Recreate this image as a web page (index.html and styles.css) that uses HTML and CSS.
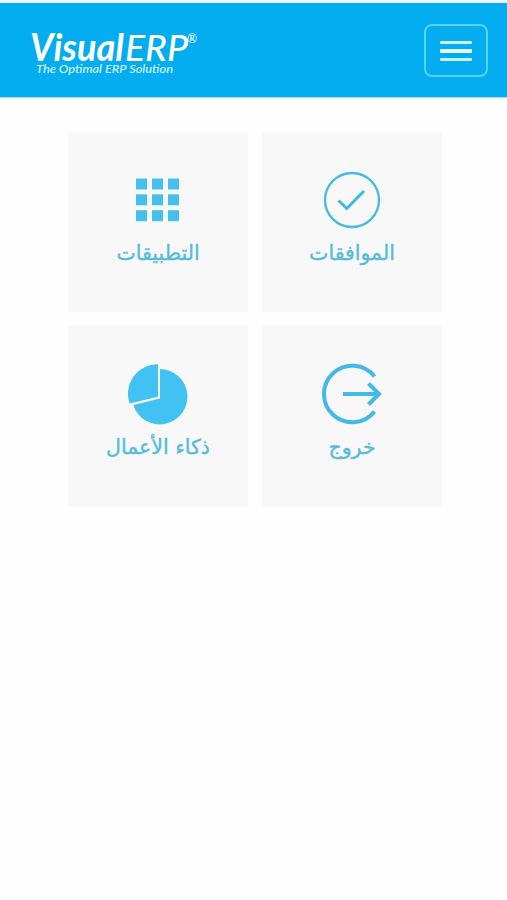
FILE: index.html
```html
<!DOCTYPE html>
<html lang="ar">
<head>
  <meta charset="UTF-8" />
  <meta name="viewport" content="width=device-width, initial-scale=1.0"/>
  <title>VisualERP</title>
  <link rel="stylesheet" href="styles.css">
</head>
<body>
  <header class="navbar">
    <svg class="logo" width="172" height="54" viewBox="0 0 172 54">
      <text class="logo-bold" x="0" y="33.5" textLength="94" lengthAdjust="spacingAndGlyphs">Visual</text>
      <text class="logo-light" x="95" y="33.5" textLength="63" lengthAdjust="spacingAndGlyphs">ERP</text>
      <text class="logo-mark" x="157" y="15.5" textLength="10" lengthAdjust="spacingAndGlyphs">®</text>
      <text class="logo-tagline" x="6" y="46" textLength="137" lengthAdjust="spacingAndGlyphs">The Optimal ERP Solution</text>
    </svg>
    <button class="menu-button" aria-label="Menu">
      <span class="bar"></span>
      <span class="bar middle"></span>
      <span class="bar"></span>
    </button>
  </header>

  <main class="tiles" dir="rtl">
    <a class="tile">
      <svg class="icon" width="64" height="64" viewBox="0 0 64 64">
        <circle cx="32" cy="32" r="27" fill="none" stroke="#45bbe4" stroke-width="2.3"/>
        <path d="M18.5 32.5L26.8 40.5L44 23" fill="none" stroke="#3db9e8" stroke-width="3"/>
      </svg>
      <span class="label">الموافقات</span>
    </a>
    <a class="tile">
      <svg class="icon" width="64" height="64" viewBox="0 0 64 64" fill="#45bfed">
        <rect x="10" y="10.5" width="11" height="11"/>
        <rect x="26" y="10.5" width="11" height="11"/>
        <rect x="42" y="10.5" width="11" height="11"/>
        <rect x="10" y="26.3" width="11" height="11"/>
        <rect x="26" y="26.3" width="11" height="11"/>
        <rect x="42" y="26.3" width="11" height="11"/>
        <rect x="10" y="42.2" width="11" height="11"/>
        <rect x="26" y="42.2" width="11" height="11"/>
        <rect x="42" y="42.2" width="11" height="11"/>
      </svg>
      <span class="label">التطبيقات</span>
    </a>
    <a class="tile">
      <svg class="icon" width="64" height="64" viewBox="0 0 64 64" fill="none" stroke="#42b9e6">
        <path d="M54.5 14.5A28.3 28.3 0 1 0 54.5 49.5" stroke-width="4"/>
        <path d="M23 32H58M48.5 21.5L59 32L48.5 42.5" stroke-width="4"/>
      </svg>
      <span class="label">خروج</span>
    </a>
    <a class="tile">
      <svg class="icon" width="64" height="64" viewBox="0 0 64 64" fill="#42c2f3">
        <path d="M34 7A27.7 27.7 0 1 1 7.3 43L34 36.5Z"/>
        <path d="M32 2.3V34.7L3.6 41.5A29.5 29.5 0 0 1 32 2.3Z"/>
      </svg>
      <span class="label">ذكاء الأعمال</span>
    </a>
  </main>
</body>
</html>
```

FILE: styles.css
```css
body {
  margin: 0;
  background-color: #fefefe;
  font-family: "DejaVu Sans", sans-serif;
}
.navbar {
  display: flex;
  align-items: flex-start;
  justify-content: space-between;
  box-sizing: border-box;
  height: 98px;
  padding: 24px 19px 0 30px;
  background-color: #03adf0;
  border-top: 3px solid #eaf7fc;
  border-bottom: 1px solid #a5e3fa;
}
.logo {
  display: block;
  overflow: visible;
  fill: #fff;
  font-family: Lato, sans-serif;
  font-style: italic;
}
.logo-bold {
  font-size: 38px;
  font-weight: 700;
}
.logo-light {
  font-size: 36px;
  font-weight: 500;
}
.logo-mark {
  font-size: 13px;
}
.logo-tagline {
  font-size: 12px;
  font-weight: 500;
  fill: #d5f5ff;
}
.menu-button {
  display: flex;
  flex-direction: column;
  align-items: center;
  justify-content: center;
  gap: 5px;
  width: 64px;
  height: 53px;
  margin-top: -3px;
  padding: 0;
  background: none;
  border: 2px solid #55d3fb;
  border-radius: 8px;
}
.bar {
  width: 32px;
  height: 3px;
  border-radius: 1px;
  background-color: #c4f3ff;
}
.middle {
  height: 4px;
  background-color: #e6fbff;
}
.tiles {
  display: grid;
  grid-template-columns: 180px 180px;
  grid-auto-rows: 180px;
  gap: 14px;
  justify-content: start;
  padding: 34px 65px 0;
}
.tile {
  display: flex;
  flex-direction: column;
  align-items: center;
  padding-top: 36px;
  background-color: #f8f8f8;
  color: #55bcdd;
}
.icon {
  display: block;
}
.label {
  margin-top: 6px;
  font-size: 20.5px;
  line-height: 30px;
  white-space: nowrap;
  -webkit-text-stroke: 0.4px #55bcdd;
}
```
